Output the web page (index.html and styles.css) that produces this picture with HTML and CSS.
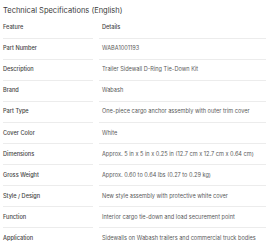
FILE: index.html
```html
<!DOCTYPE html>
<html>
<head>
<meta charset="utf-8">
<link rel="stylesheet" href="styles.css">
</head>
<body>
<div class="spec">
  <h2 class="spec-title">Technical Specifications (English)</h2>
  <div class="spec-table">
    <div class="row head"><div class="cell">Feature</div><div class="cell value">Details</div></div>
    <div class="row"><div class="cell label">Part Number</div><div class="cell value">WABA1001193</div></div>
    <div class="row"><div class="cell label">Description</div><div class="cell value">Trailer Sidewall D-Ring Tie-Down Kit</div></div>
    <div class="row"><div class="cell label">Brand</div><div class="cell value">Wabash</div></div>
    <div class="row"><div class="cell label">Part Type</div><div class="cell value">One-piece cargo anchor assembly with outer trim cover</div></div>
    <div class="row"><div class="cell label">Cover Color</div><div class="cell value">White</div></div>
    <div class="row"><div class="cell label">Dimensions</div><div class="cell value">Approx. 5 in x 5 in x 0.25 in (12.7 cm x 12.7 cm x 0.64 cm)</div></div>
    <div class="row"><div class="cell label">Gross Weight</div><div class="cell value">Approx. 0.60 to 0.64 lbs (0.27 to 0.29 kg)</div></div>
    <div class="row"><div class="cell label">Style / Design</div><div class="cell value">New style assembly with protective white cover</div></div>
    <div class="row"><div class="cell label">Function</div><div class="cell value">Interior cargo tie-down and load securement point</div></div>
    <div class="row last"><div class="cell label">Application</div><div class="cell value">Sidewalls on Wabash trailers and commercial truck bodies</div></div>
  </div>
</div>
</body>
</html>
```
FILE: styles.css
```css
html, body {
  margin: 0;
  padding: 0;
  background: #fff;
}
body {
  font-family: Inter, Roboto, "Liberation Sans", sans-serif;
  color: #555;
}
.spec {
  padding: 4px 4px 0 3px;
}
.spec-title {
  margin: 0;
  font-size: 7.5px;
  font-weight: 400;
  color: #3a3a3a;
  line-height: 13.5px;
}
.spec-table {
  font-size: 5.6px;
  line-height: 7px;
}
.row {
  display: grid;
  grid-template-columns: 90px 1fr;
  column-gap: 6px;
}
.cell {
  height: 20.1px;
  display: flex;
  align-items: center;
  border-bottom: 1px solid #ececec;
  white-space: nowrap;
}
.row.last .cell {
  border-bottom: none;
}
.head .cell {
  font-weight: 500;
  color: #444;
}
.cell.value {
  padding-left: 3px;
  color: #5a5a5a;
}
.head .cell.value {
  color: #444;
}
.cell.label {
  color: #444;
  font-weight: 500;
}
```
